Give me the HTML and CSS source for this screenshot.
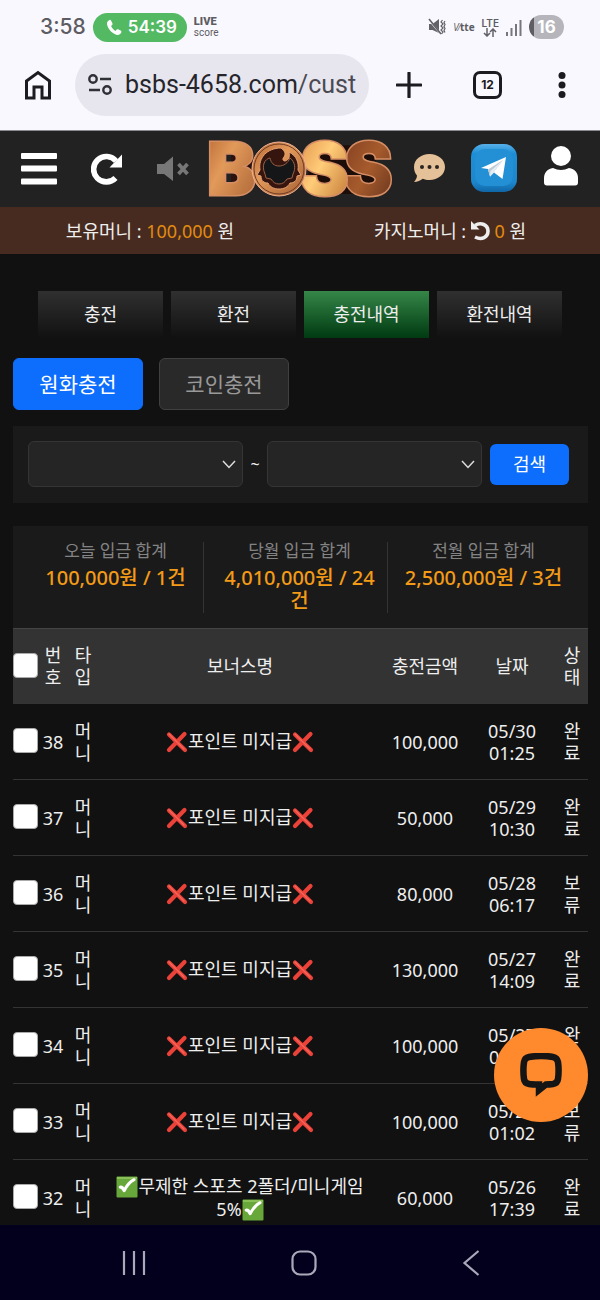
FILE: index.html
```html
<!DOCTYPE html>
<html lang="ko">
<head>
<meta charset="utf-8">
<meta name="viewport" content="width=device-width, initial-scale=1">
<title>BOSS 충전내역</title>
<link rel="stylesheet" href="styles.css">
</head>
<body>
<svg class="sprite" aria-hidden="true">
  <symbol id="cross" viewBox="0 0 22 22"><path d="M3 3.500 19 19M18.500 3 3 19" fill="none" stroke="#ea4238" stroke-width="4.200" stroke-linecap="round"/><path d="M3 3 18 18" fill="none" stroke="#f4665b" stroke-width="1.200" stroke-linecap="round"/></symbol>
  <symbol id="tick" viewBox="0 0 22 22"><rect x="0.500" y="0.500" width="21" height="21" rx="1" fill="#68a83a"/><path d="M1 2h20" stroke="#94c963" stroke-width="1.500"/><path d="M4.200 11.200c1.600-.4 2.800.900 3.900 3.500 2.700-5 5.900-9 10-11" fill="none" stroke="#fff" stroke-width="3" stroke-linecap="round" stroke-linejoin="round"/></symbol>
</svg>

<header class="chrome">
  <div class="status">
    <span class="clock">3:58</span>
    <span class="call"><svg width="16" height="17" viewBox="0 0 16 17"><path d="M3.500 1C1.800 1.800.6 3.300 1.100 5.600c.9 4.600 4.600 8.700 9.200 10.100 2.200.6 4.200-.3 5-2.200.3-.8 0-1.500-.7-1.900l-2.500-1.300c-.6-.3-1.300-.1-1.700.4l-.9 1.200C7.500 10.800 6 9.200 5.100 7.100l1.100-1.200c.4-.4.5-1 .2-1.600L5 1.500C4.700.9 4.100.7 3.500 1Z" fill="#fff"/></svg>54:39</span>
    <span class="live"><b>LIVE</b><span>score</span></span>
    <span class="signals">
      <svg width="18" height="18" viewBox="0 0 18 18" fill="none" stroke="#626167"><path d="M1 6h3.500L11 1v14L4.500 12H1Z" fill="#626167" stroke="none"/><path d="m1 2 11 13" stroke="#f9f8fe" stroke-width="1.800"/><path d="m1 1 12 15" stroke-width="1.600"/><path d="m14.500 2-1.500 2 2 2-2 2 2 2-2 2 2 2-1.500 2M17 3l-1 1.500 1 2-1 2 1 2-1 2 1 2" stroke-width="1.200"/></svg>
      <span class="volte"><i>V</i>⁄<b>tte</b></span>
      <span class="lte">LTE<svg width="14" height="9" viewBox="0 0 14 9" fill="none" stroke="#626167" stroke-width="1.500"><path d="M4 0v8M1 5l3 3 3-3M10 9V1M7 4l3-3 3 3"/></svg></span>
      <svg width="16" height="17" viewBox="0 0 16 17" fill="#77767c"><path d="M0 13h2v4H0zM4.500 9h2v8h-2zM9 5h2v12H9zM13.500 1h2v16h-2z"/></svg>
      <span class="battery">16</span>
    </span>
  </div>
  <div class="toolbar">
    <button class="tool" aria-label="홈"><svg width="28" height="30" viewBox="0 0 28 30"><path d="M2.500 11 14 2.500 25.500 11v17H18V17h-8v11H2.500Z" fill="none" stroke="#1b1b20" stroke-width="3"/></svg></button>
    <button class="address"><svg width="26" height="22" viewBox="0 0 26 22" fill="none" stroke="#303037" stroke-width="2.400"><circle cx="6" cy="5" r="3.700"/><path d="M13 5h11M2 16h11"/><circle cx="20" cy="16" r="3.700"/></svg><span>bsbs-4658.com<span class="path">/cust</span></span></button>
    <button class="tool plus" aria-label="새 탭"><svg width="26" height="26" viewBox="0 0 26 26"><path d="M13 1v24M1 13h24" stroke="#1b1b20" stroke-width="3.200" stroke-linecap="round"/></svg></button>
    <button class="tool tabcount">12</button>
    <button class="tool more" aria-label="메뉴"><svg width="8" height="28" viewBox="0 0 8 28" fill="#1b1b20"><circle cx="4" cy="4.500" r="3.500"/><circle cx="4" cy="14" r="3.500"/><circle cx="4" cy="23.500" r="3.500"/></svg></button>
  </div>
</header>

<main class="site">
  <div class="topbar">
    <div class="icons">
      <button aria-label="메뉴"><svg width="36" height="34" viewBox="0 0 36 34" fill="#fff"><rect y="1" width="36" height="6" rx="1"/><rect y="13.500" width="36" height="6" rx="1"/><rect y="26.500" width="36" height="6" rx="1"/></svg></button>
      <button aria-label="새로고침"><svg width="32" height="32" viewBox="0 0 32 32"><path d="M24.500 25A12.700 12.700 0 1 1 25 8" fill="none" stroke="#fff" stroke-width="5.600"/><path d="M31 1.500v13H18.500Z" fill="#fff"/></svg></button>
      <button aria-label="음소거"><svg width="32" height="26" viewBox="0 0 32 26"><path d="M0 8h7l9-7.500v24.500l-9-7H0Z" fill="#777"/><path d="m21.500 8 9 10m0-10-9 10" stroke="#777" stroke-width="3.700"/></svg></button>
    </div>
    <a class="logo" href="#" aria-label="BOSS"><svg width="184" height="58" viewBox="0 0 184 58">
      <defs>
        <linearGradient id="wood" x1="0" y1="0" x2="1" y2="1"><stop offset="0" stop-color="#b4642f"/><stop offset=".4" stop-color="#e29a5a"/><stop offset="1" stop-color="#a65e32"/></linearGradient>
        <linearGradient id="gold" x1="0" y1="0" x2="1" y2="1"><stop offset="0" stop-color="#dc8a45"/><stop offset=".45" stop-color="#ffcc78"/><stop offset="1" stop-color="#b96c2c"/></linearGradient>
        <linearGradient id="rust" x1="0" y1="0" x2="1" y2="1"><stop offset="0" stop-color="#7c3b20"/><stop offset=".5" stop-color="#a65b2c"/><stop offset="1" stop-color="#60301d"/></linearGradient>
      </defs>
      <path d="M22 14h22v30H22Z" fill="#2c120c"/>
      <path d="M100 14c5-8 12-10 22-9l50 1-6 18 6 16-12 14h-45l-16-9Z" fill="#1d0d09"/>
      <g class="logo-letters">
        <text x="-2" y="55" fill="url(#wood)">B</text>
        <text x="135" y="55" fill="url(#rust)">S</text>
        <text x="91" y="55" fill="url(#gold)">S</text>
      </g>
      <ellipse cx="70" cy="29" rx="27" ry="27" fill="url(#wood)" stroke="#efb295"/>
      <ellipse cx="70" cy="29" rx="25" ry="25" fill="none" stroke="#713b25"/>
      <path d="M72 8c4 3 5 6 3 9-2 2-1 4 1 4 4-1 5-4 4-9 8 4 10 11 9 18l3 5-4 1c0 5-3 7-7 7-2 4-6 6-11 6s-9-2-11-6c-4 0-7-2-7-7l-4-1 3-5c-2-12 7-22 21-22Z" fill="#35150e" stroke="#e5a174"/>
      <path d="M56 34c-4-9 0-15 5-16 1 5 4 8 9 8s9-3 11-8c5 4 6 10 3 16l-1 4-5 1c-2 3-4 5-8 5s-6-2-8-5l-5-1Z" fill="#151617" stroke="#9b6047"/>
    </svg></a>
    <div class="icons end">
      <button aria-label="채팅"><svg width="32" height="28" viewBox="0 0 32 28"><path d="M16.500 0C25 0 32 5.500 32 13s-7 13-15.500 13c-2.500 0-4.800-.4-6.800-1.300C7.500 26.500 4.500 28 1 28c1.800-2 3-4.200 3-6.500C2 19.300 1 16.500 1 13 1 5.500 8 0 16.500 0Z" fill="#e5c199"/><g fill="#282522"><circle cx="9" cy="13" r="2"/><circle cx="16.500" cy="13" r="2"/><circle cx="24" cy="13" r="2"/></g></svg></button>
      <button aria-label="텔레그램"><svg width="46" height="48" viewBox="0 0 46 48"><defs><linearGradient id="tg" x1="0" y1="0" x2="0" y2="1"><stop offset="0" stop-color="#57b0e9"/><stop offset=".2" stop-color="#1d8fd6"/><stop offset=".8" stop-color="#1d86cb"/><stop offset="1" stop-color="#1066a6"/></linearGradient></defs><rect width="46" height="48" rx="13" fill="url(#tg)"/><rect x="4" y="5" width="38" height="37" rx="10" fill="#2390d6"/><path d="m10 24 25-11-3.500 22-8.500-6.500-4 4-2-7.500Z" fill="#fff"/><path d="m17 25.500 15-9.500-9.500 12.500-3.500 4Z" fill="#bdcbd5"/><path d="m22.500 28.500 9-12-12 10.500-.5 5.500Z" fill="#e6edf2"/></svg></button>
      <button aria-label="내 정보"><svg width="36" height="44" viewBox="0 0 36 44" fill="#fff"><circle cx="18" cy="10" r="10"/><path d="M10 22c5 2.500 11 2.500 16 0 6 1 9 5 9 10v4.500c0 2-1 3-3 3H4c-2 0-3-1-3-3V32c0-5 3-9 9-10Z"/></svg></button>
    </div>
  </div>

  <div class="balances">
    <p>보유머니 : <strong>100,000</strong> 원</p>
    <p>카지노머니 : <svg width="19" height="20" viewBox="0 0 19 20"><path d="M4 4.500C10 .5 17 4 17 10s-6 9.500-13 6" fill="none" stroke="#eee" stroke-width="3.600"/><path d="M0 0v8.500h8.500Z" fill="#eee"/></svg> <strong>0</strong> 원</p>
  </div>

  <nav class="tabs">
    <a href="#">충전</a><a href="#">환전</a><a href="#" class="current">충전내역</a><a href="#">환전내역</a>
  </nav>

  <div class="content">
    <div class="kinds"><button class="kind active">원화충전</button><button class="kind">코인충전</button></div>

    <form class="filter">
      <span class="picker"><select aria-label="시작일"><option></option></select><svg width="14" height="9" viewBox="0 0 14 9"><path d="m1 1 6 6.500L13 1" fill="none" stroke="#ddd" stroke-width="1.500"/></svg></span>
      <span class="tilde">~</span>
      <span class="picker"><select aria-label="종료일"><option></option></select><svg width="14" height="9" viewBox="0 0 14 9"><path d="m1 1 6 6.500L13 1" fill="none" stroke="#ddd" stroke-width="1.500"/></svg></span>
      <button type="button" class="search">검색</button>
    </form>

    <dl class="totals">
      <div><dt>오늘 입금 합계</dt><dd>100,000원 / 1건</dd></div>
      <div><dt>당월 입금 합계</dt><dd>4,010,000원 / 24건</dd></div>
      <div><dt>전월 입금 합계</dt><dd>2,500,000원 / 3건</dd></div>
    </dl>

    <table class="history">
      <colgroup><col class="c-check"><col class="c-num"><col class="c-num"><col><col class="c-amount"><col class="c-date"><col class="c-state"></colgroup>
      <thead><tr><th><input type="checkbox" aria-label="전체 선택"></th><th>번호</th><th>타입</th><th>보너스명</th><th>충전금액</th><th>날짜</th><th>상태</th></tr></thead>
      <tbody>
        <tr><td><input type="checkbox" aria-label="38 선택"></td><td>38</td><td>머니</td><td><svg class="mark"><use href="#cross"/></svg>포인트 미지급<svg class="mark"><use href="#cross"/></svg></td><td>100,000</td><td>05/30 01:25</td><td>완료</td></tr>
        <tr><td><input type="checkbox" aria-label="37 선택"></td><td>37</td><td>머니</td><td><svg class="mark"><use href="#cross"/></svg>포인트 미지급<svg class="mark"><use href="#cross"/></svg></td><td>50,000</td><td>05/29 10:30</td><td>완료</td></tr>
        <tr><td><input type="checkbox" aria-label="36 선택"></td><td>36</td><td>머니</td><td><svg class="mark"><use href="#cross"/></svg>포인트 미지급<svg class="mark"><use href="#cross"/></svg></td><td>80,000</td><td>05/28 06:17</td><td>보류</td></tr>
        <tr><td><input type="checkbox" aria-label="35 선택"></td><td>35</td><td>머니</td><td><svg class="mark"><use href="#cross"/></svg>포인트 미지급<svg class="mark"><use href="#cross"/></svg></td><td>130,000</td><td>05/27 14:09</td><td>완료</td></tr>
        <tr><td><input type="checkbox" aria-label="34 선택"></td><td>34</td><td>머니</td><td><svg class="mark"><use href="#cross"/></svg>포인트 미지급<svg class="mark"><use href="#cross"/></svg></td><td>100,000</td><td>05/27 01:05</td><td>완료</td></tr>
        <tr><td><input type="checkbox" aria-label="33 선택"></td><td>33</td><td>머니</td><td><svg class="mark"><use href="#cross"/></svg>포인트 미지급<svg class="mark"><use href="#cross"/></svg></td><td>100,000</td><td>05/27 01:02</td><td>보류</td></tr>
        <tr><td><input type="checkbox" aria-label="32 선택"></td><td>32</td><td>머니</td><td><svg class="mark"><use href="#tick"/></svg>무제한 스포츠 2폴더/미니게임 5%<svg class="mark"><use href="#tick"/></svg></td><td>60,000</td><td>05/26 17:39</td><td>완료</td></tr>
      </tbody>
    </table>
  </div>
</main>

<button class="chat" aria-label="상담"><svg width="44" height="44" viewBox="0 0 44 44"><path d="M10 4C19 2.500 26 2.500 34 4c3 .6 4.500 2.500 5 5 .7 5 .7 12 0 17-.4 3-2 4.500-5 5-3 .4-5 .5-7 .500L20 37v-5.500c-4 0-7 0-10-.5s-4.600-2-5-5C4.300 21 4.300 14 5 9c.5-3 2-4.500 5-5Z" fill="none" stroke="#151515" stroke-width="6.500"/></svg></button>

<nav class="system">
  <button aria-label="최근 앱"><svg width="24" height="26" viewBox="0 0 24 26"><path d="M2 1v24M12 1v24M22 1v24" stroke="#a9a9bb" stroke-width="2.200"/></svg></button>
  <button aria-label="홈 화면"><svg width="26" height="26" viewBox="0 0 26 26"><rect x="1.500" y="1.500" width="23" height="23" rx="7.500" fill="none" stroke="#a9a9bb" stroke-width="2.200"/></svg></button>
  <button aria-label="뒤로"><svg width="18" height="26" viewBox="0 0 18 26"><path d="M16.500 1 2.500 13l14 12" fill="none" stroke="#a9a9bb" stroke-width="2.200"/></svg></button>
</nav>
</body>
</html>
```
FILE: styles.css
```css
* { box-sizing: border-box; }
body {
  margin: 0;
  height: 100vh;
  display: flex;
  flex-direction: column;
  overflow: hidden;
  position: relative;
  background: #111;
  color: #eee;
  font: 18px/22px "Noto Sans", "Noto Sans CJK KR", sans-serif;
}
button { border: 0; padding: 0; margin: 0; background: none; color: inherit; font: inherit; }
a { color: inherit; text-decoration: none; }
p, dl, dd { margin: 0; }
svg { display: block; flex: none; }
.sprite { position: absolute; width: 0; height: 0; }

/* Browser chrome */
.chrome { flex: none; background: #f9f8fe; color: #5d5c62; border-bottom: 1px solid #8b8b92; font-family: Inter, sans-serif; }
.status { display: flex; align-items: center; height: 54px; padding: 0 36px 0 40px; gap: 7px; }
.clock { font-size: 21px; font-weight: 500; }
.call { display: flex; align-items: center; gap: 6px; height: 29px; padding: 0 10px 0 13px; border-radius: 15px; background: #53b962; color: #fff; font-size: 17px; font-weight: 600; }
.live { display: flex; flex-direction: column; font: 10px/10px Roboto, sans-serif; }
.live b { font: 900 11px/12px Roboto, sans-serif; }
.signals { display: flex; align-items: center; gap: 7px; margin-left: auto; }
.volte { font: 10px/12px "Open Sans", sans-serif; }
.lte { display: flex; flex-direction: column; align-items: center; font-size: 10px; line-height: 10px; font-weight: 600; }
.battery { width: 35px; height: 24px; border-radius: 12px; background: linear-gradient(90deg, #5e5d63 5px, #b6b5bb 5px); color: #fff; font-size: 17px; line-height: 24px; font-weight: 700; text-align: center; }
.toolbar { display: flex; align-items: center; height: 62px; margin-bottom: 14px; padding: 0 34px 0 24px; color: #1b1b20; }
.tool { flex: none; }
.address { display: flex; flex: 1; min-width: 0; align-items: center; gap: 12px; height: 62px; margin: 0 27px 0 23px; padding: 0 12px; border-radius: 31px; background: #e7e5ee; color: #25252b; font: 25px/30px Roboto, sans-serif; white-space: nowrap; }
.path { color: #4b4a52; }
.plus { margin-right: 51px; }
.tabcount { width: 29px; height: 28px; margin-right: 56px; border: 3px solid #1b1b20; border-radius: 7px; font-size: 12px; line-height: 22px; font-weight: 700; }

/* Site header */
.site { flex: 1; min-height: 0; overflow: hidden; }
.topbar { display: flex; align-items: center; justify-content: space-between; height: 76px; padding: 0 21px; background: #222; }
.icons { display: flex; align-items: center; gap: 34px; }
.icons.end { gap: 26px; padding-bottom: 3px; }
.logo svg { overflow: visible; }
.logo-letters { font: 900 73px/58px Inter, sans-serif; stroke: #d58d64; stroke-width: 3; paint-order: stroke; }
.balances { display: grid; grid-template-columns: 1fr 1fr; align-items: center; height: 47px; background: #482b20; text-align: center; }
.balances strong { color: #e28b10; font-weight: 400; }
.balances svg { display: inline-block; vertical-align: -3px; }
.tabs { display: flex; gap: 8px; margin: 37px 38px 20px; }
.tabs a { flex: 1; height: 47px; line-height: 46px; text-align: center; background: linear-gradient(#303030, #111); }
.tabs .current { background: linear-gradient(#358648, #003a11); }

/* Deposit history */
.content { padding: 0 12px 0 13px; }
.kinds { display: flex; gap: 16px; }
.kind { width: 130px; height: 52px; border: 1px solid #404040; border-radius: 6px; background: #292929; color: #999; font-size: 21px; }
.kind.active { border-color: #0d6efd; background: #0d6efd; color: #fff; }
.filter { display: flex; align-items: center; gap: 8px; margin: 16px 0 23px; padding: 15px 19px 16px 15px; background: #1a1a1a; }
.picker { display: grid; flex: 1; align-items: center; }
.picker > * { grid-area: 1 / 1; }
.picker select { width: 100%; height: 46px; border: 1px solid #353535; border-radius: 6px; background: #252525; appearance: none; }
.picker svg { justify-self: end; margin-right: 7px; pointer-events: none; }
.tilde { width: 8px; display: flex; justify-content: center; font-size: 16px; }
.search { width: 79px; height: 41px; border-radius: 6px; background: #0d6efd; color: #fff; }
.totals { display: grid; grid-template-columns: 1fr 1fr 1fr; gap: 8px; padding: 16px 16px 15px 15px; background: #1a1a1a; text-align: center; }
.totals div { padding: 0 4px; border-right: 1px solid #343434; }
.totals div:last-child { border-right-color: transparent; }
.totals dt { color: #838383; font-size: 17px; line-height: 18px; padding-bottom: 6px; }
.totals dd { color: #f39b17; font-size: 20px; font-weight: 500; line-height: 23px; padding-bottom: 1px; word-break: break-all; }
.history { width: 100%; table-layout: fixed; border-collapse: collapse; }
.c-check { width: 25px; }
.c-num { width: 30px; }
.c-amount { width: 86px; }
.c-date { width: 88px; }
.c-state { width: 32px; }
.history th, .history td { height: 76px; padding: 0 3px; border-bottom: 1px solid #343434; font-weight: 400; text-align: center; vertical-align: middle; }
.history th { height: 75px; background: #333; border-top: 1px solid #444; }
.history th:first-child, .history td:first-child { padding: 0; }
.history td:nth-child(4) { padding: 0 12px; }
.history td:nth-child(6) { padding: 0 16px; }
.history input { display: block; appearance: none; width: 25px; height: 25px; margin: 0 0 2px; border: 1px solid #aaa; border-radius: 4px; background: #fff; }
.mark { display: inline-block; width: 22px; height: 22px; vertical-align: -5px; }

/* Floating chat and system navigation */
.chat { position: absolute; right: 12px; bottom: 178px; display: grid; place-items: center; width: 94px; height: 94px; border-radius: 50%; background: #ff8a2e; }
.system { flex: none; display: flex; align-items: center; justify-content: space-between; height: 75px; padding: 0 120px 0 122px; background: #02001c; }
```
